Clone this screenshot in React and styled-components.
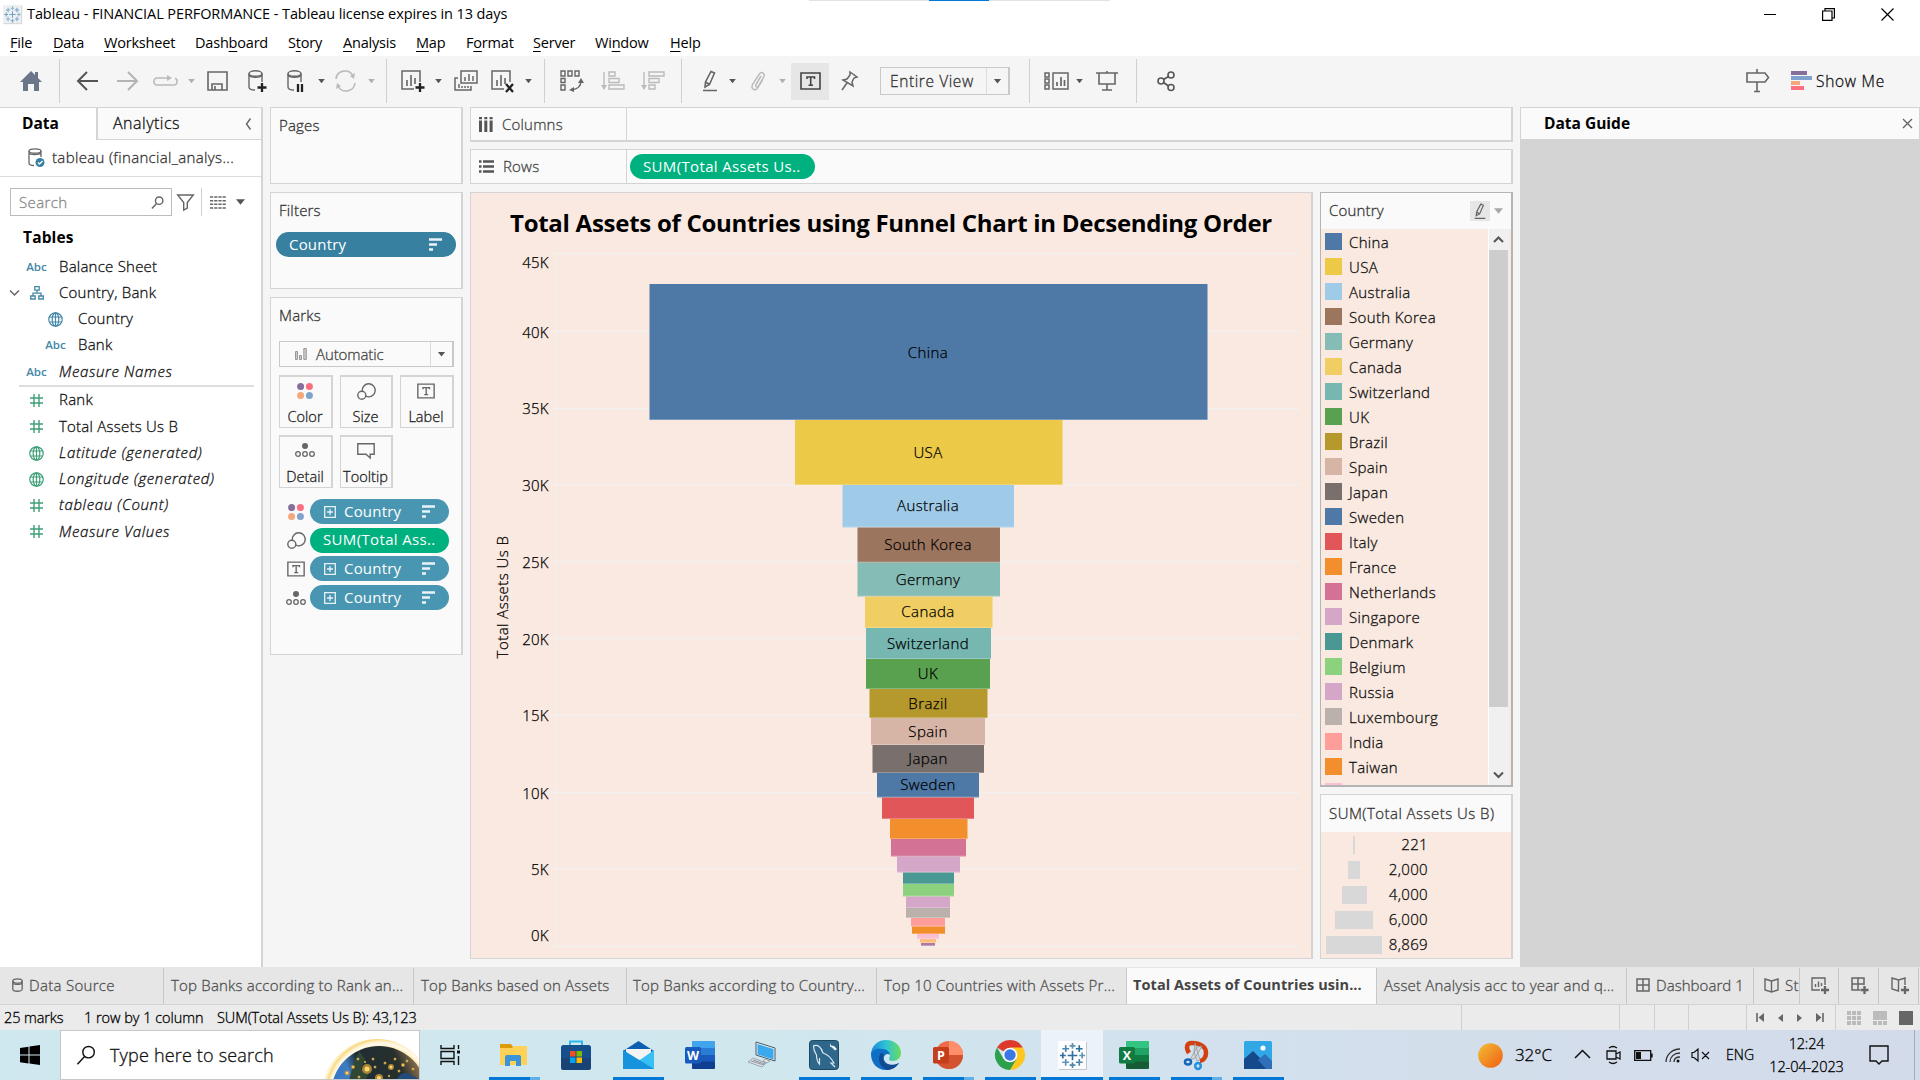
import React from 'react';
import styled, { createGlobalStyle, css } from 'styled-components';

const ui = '"Open Sans", "Noto Sans", sans-serif';
const line = '#d4d4d4';

const Global = createGlobalStyle`
  * { box-sizing: border-box; }
  body { margin: 0; background: #f5f5f5; overflow: hidden; }
  svg { display: block; flex: none; overflow: visible; }
`;

const Screen = styled.div`
  width: 1920px;
  height: 1080px;
  display: flex;
  flex-direction: column;
  font-family: ${ui};
  font-size: 15px;
  font-weight: 300;
  letter-spacing: 0.2px;
  -webkit-text-stroke: 0.3px currentColor;
  color: #222;
  background: #f5f5f5;
  white-space: nowrap;
  overflow: hidden;
`;

const T = styled.span`
  font-size: ${p => p.$s || 15}px;
  font-weight: ${p => p.$w || 'inherit'};
  ${p => p.$w && css`-webkit-text-stroke: 0;`}
  letter-spacing: ${p => (p.$ls !== undefined ? `${p.$ls}px` : p.$w ? '0' : 'inherit')};
  color: ${p => p.$c || 'inherit'};
  font-style: ${p => (p.$i ? 'italic' : 'normal')};
  line-height: 20px;
  padding-bottom: ${p => (p.$pb === undefined ? 2 : p.$pb)}px;
`;

/* ---------- title and menu ---------- */
const TitleBar = styled.header`
  height: 28px;
  background: #fff;
  display: flex;
  align-items: center;
  padding: 0 26px 0 3px;
  position: relative;
`;
const TitleText = styled(T)`
  margin-left: 5px;
  flex: 1;
  color: #000;
`;
const TopStrip = styled.div`
  position: absolute;
  top: 0;
  left: 809px;
  width: 301px;
  height: 1px;
  background: linear-gradient(90deg, #e3e3e3 120px, #0078d7 120px, #0078d7 180px, #e3e3e3 180px);
`;
const WinButtons = styled.div`
  display: flex;
  align-items: center;
  gap: 46px;
`;
const MenuBar = styled.nav`
  height: 28px;
  background: #fff;
  display: flex;
  align-items: center;
  padding: 1px 0 0 10px;
  -webkit-text-stroke: 0;
`;
const MenuItem = styled.div`
  width: ${p => p.$w}px;
  font-size: 14.5px;
  font-weight: 400;
  color: #000;
  letter-spacing: -0.2px;
  line-height: 20px;
  u { text-underline-offset: 3px; text-decoration-thickness: 1px; }
`;

/* ---------- toolbar ---------- */
const Toolbar = styled.div`
  height: 51px;
  display: flex;
  align-items: center;
  padding-bottom: 1px;
  background: #f5f5f5;
`;
const Tool = styled.div`
  width: ${p => p.$w}px;
  flex: none;
  margin-left: ${p => (p.$end ? 'auto' : `${p.$ml}px`)};
  display: flex;
  justify-content: center;
  align-items: center;
  opacity: ${p => (p.$dim ? 0.4 : 1)};
`;
const ToggleOn = styled(Tool)`
  height: 37px;
  background: #e6e6e6;
`;
const Separator = styled.div`
  width: 1px;
  flex: none;
  height: 44px;
  margin-left: ${p => p.$ml}px;
  background: #d0d0d0;
`;
const Caret = styled.i`
  width: ${p => p.$s || 7}px;
  height: ${p => (p.$s || 7) / 2 + 1}px;
  flex: none;
  margin-left: ${p => p.$ml || 0}px;
  background: ${p => p.$c || '#555'};
  clip-path: polygon(0 0, 100% 0, 50% 100%);
`;
const Select = styled.div`
  width: ${p => p.$w}px;
  flex: none;
  height: ${p => p.$h}px;
  margin-left: ${p => p.$ml || 0}px;
  border: 1px solid #c9c9c9;
  border-right-width: 2px;
  display: flex;
  align-items: center;
  background: ${p => p.$bg || '#f5f5f5'};
`;
const SelectValue = styled.div`
  flex: 1;
  display: flex;
  align-items: center;
  padding-left: ${p => p.$pl}px;
  gap: 9px;
`;
const SelectArrow = styled.div`
  width: 22px;
  height: 100%;
  border-left: 1px solid #dcdcdc;
  display: flex;
  align-items: center;
  justify-content: center;
`;
const ShowMe = styled.div`
  display: flex;
  align-items: center;
  gap: 4px;
  margin-left: 22px;
  padding-right: 35px;
`;

/* ---------- body ---------- */
const Body = styled.main`
  height: 860px;
  display: flex;
`;
const DataPane = styled.aside`
  width: 263px;
  height: 860px;
  background: #fff;
  border-right: 2px solid ${line};
  display: flex;
  flex-direction: column;
`;
const PaneTabs = styled.div`
  height: 33px;
  display: flex;
`;
const PaneTab = styled.div`
  flex: ${p => (p.$active ? '0 0 98px' : '1')};
  border-top: 1px solid ${line};
  padding: 0 8px 0 ${p => (p.$active ? 22 : 15)}px;
  display: flex;
  align-items: center;
  justify-content: space-between;
  background: ${p => (p.$active ? '#fff' : '#fafafa')};
  ${p => p.$active ? css`border-right: 2px solid ${line};` : css`border-bottom: 1px solid ${line};`}
`;
const SourceRow = styled.div`
  height: 37px;
  border-bottom: 1px solid #dcdcdc;
  display: flex;
  align-items: center;
  gap: 7px;
  padding-left: 28px;
`;
const SearchRow = styled.div`
  height: 52px;
  padding: 11px 0 0 10px;
  display: flex;
`;
const SearchBox = styled.div`
  width: 162px;
  height: 28px;
  border: 1px solid #bcbcbc;
  display: flex;
  align-items: center;
  justify-content: space-between;
  padding: 0 7px 0 8px;
`;
const SearchTools = styled.div`
  height: 28px;
  display: flex;
  align-items: center;
  padding-left: 5px;
`;
const Rule = styled.div`
  width: 1px;
  height: 28px;
  margin: 0 8px 0 7px;
  background: #d0d0d0;
`;
const TablesHead = styled.div`
  height: 17px;
  padding: 0 0 0 23px;
  color: #000;
  margin-bottom: 8px;
  display: flex;
  align-items: center;
`;
const FieldRow = styled.div`
  height: ${p => p.$h || 26}px;
  padding-left: ${p => (p.$indent ? 19 : 0)}px;
  display: flex;
  align-items: center;
  color: #111;
`;
const Twisty = styled.span`
  width: 26px;
  display: flex;
  justify-content: center;
  padding-left: 2px;
`;
const FieldIcon = styled.span`
  width: 21px;
  margin-right: 12px;
  display: flex;
  justify-content: center;
  color: ${p => p.$c};
`;
const PaneRule = styled.div`
  height: 2px;
  margin: 0 7px 0 19px;
  background: #dedede;
`;

const CardColumn = styled.section`
  width: 207px;
  padding: 0 0 0 7px;
  display: flex;
  flex-direction: column;
  gap: 8px;
`;
const Card = styled.div`
  width: 193px;
  height: ${p => p.$h}px;
  background: #fafafa;
  border: 1px solid ${line};
  border-right-width: 2px;
  padding: 0 6px 0 5px;
`;
const CardTitle = styled.div`
  height: ${p => p.$h || 38}px;
  display: flex;
  align-items: center;
  padding: 0 0 ${p => p.$pb || 4}px 3px;
  color: #333;
`;
const Pill = styled.div`
  height: 25px;
  width: ${p => p.$w}px;
  margin: ${p => p.$m || 0};
  border-radius: 13px;
  background: ${p => p.$bg};
  color: #fff;
  display: flex;
  align-items: center;
  padding: 0 14px 0 ${p => p.$pl || 13}px;
  gap: 8px;
  & > svg:last-child { margin-left: auto; }
`;
const MarkGrid = styled.div`
  display: grid;
  grid-template-columns: 54px 53px 54px;
  gap: 7px;
  padding: 8px 0 11px 3px;
`;
const MarkButton = styled.div`
  height: 53px;
  border: 1px solid ${line};
  border-top-width: 2px;
  border-right-width: 2px;
  display: flex;
  flex-direction: column;
  align-items: center;
  justify-content: space-between;
  padding: 6px 1px 0 0;
`;
const MarkRow = styled.div`
  height: 28.7px;
  display: flex;
  align-items: flex-start;
`;
const MarkIcon = styled.span`
  width: 34px;
  height: 25px;
  display: flex;
  align-items: center;
  justify-content: center;
  padding-left: 5px;
`;

const Work = styled.section`
  width: 1050px;
  display: flex;
  flex-direction: column;
`;
const Shelf = styled.div`
  width: 1043px;
  height: 35px;
  margin-bottom: 7px;
  border: 1px solid ${line};
  border-right-width: 2px;
  border-bottom-width: ${p => (p.$last ? 1 : 2)}px;
  background: #fafafa;
  display: flex;
  align-items: center;
`;
const ShelfName = styled.div`
  width: 156px;
  height: 100%;
  border-right: 1px solid ${line};
  display: flex;
  align-items: center;
  gap: 9px;
  padding-left: 8px;
  color: #444;
`;
const ViewRow = styled.div`
  display: flex;
  gap: 7px;
  margin-top: 1px;
`;
const Viz = styled.div`
  width: 843px;
  height: 767px;
  border: 1px solid ${line};
  border-right-width: 2px;
  background: #fae9e0;
`;
const VizTitle = styled.h1`
  height: 60px;
  margin: 0;
  padding: 0 0 2px 39px;
  display: flex;
  align-items: center;
  font-size: 24px;
  font-weight: 700;
  letter-spacing: -0.27px;
  -webkit-text-stroke: 0;
  color: #000;
`;
const Legends = styled.div`
  width: 193px;
  display: flex;
  flex-direction: column;
  gap: 7px;
`;
const LegendCard = styled.div`
  height: ${p => p.$h}px;
  border: 1px solid ${p => p.$bc};
  border-right-width: 2px;
  ${p => p.$heavy && css`border-bottom-width: 2px;`}
  background: #fae9e0;
  overflow: hidden;
`;
const LegendHead = styled.div`
  height: ${p => p.$h}px;
  background: #fafafa;
  display: flex;
  align-items: center;
  padding: 0 8px;
  color: #333;
`;
const EditButton = styled.span`
  width: 20px;
  height: 20px;
  margin: 0 4px 0 auto;
  background: #e6e6e6;
  display: flex;
  align-items: center;
  justify-content: center;
`;
const LegendBody = styled.div`
  display: flex;
  height: 556px;
`;
const LegendList = styled.div`
  flex: 1;
  overflow: hidden;
  padding: 4px 0 0 4px;
`;
const LegendItem = styled.div`
  height: 25px;
  display: flex;
  gap: 7px;
  color: #111;
  line-height: 18px;
  letter-spacing: 0.35px;
`;
const Swatch = styled.span`
  width: 17px;
  height: 17px;
  background: ${p => p.$c};
`;
const ScrollTrack = styled.div`
  width: 21px;
  margin-right: 2px;
  background: #f0f0f0;
  border-left: 1px solid #fff;
  display: flex;
  flex-direction: column;
  align-items: flex-start;
`;
const ScrollButton = styled.div`
  width: 19px;
  height: 21px;
  display: flex;
  align-items: center;
  justify-content: center;
`;
const Thumb = styled.div`
  width: 19px;
  height: 457px;
  background: #cdcdcd;
`;
const Spacer = styled.div`flex: 1;`;
const SizeRow = styled.div`
  height: 25px;
  display: flex;
  align-items: center;
`;
const SizeBarBox = styled.div`
  width: 66px;
  display: flex;
  justify-content: center;
`;
const SizeBar = styled.div`
  width: ${p => p.$w}px;
  height: 18px;
  background: #d8d8d8;
`;
const SizeValue = styled.div`
  width: 41px;
  text-align: right;
  padding-bottom: 2px;
  letter-spacing: 0.35px;
  color: #111;
`;

const Guide = styled.aside`
  width: 400px;
  display: flex;
  flex-direction: column;
  background: #d4d4d4;
`;
const GuideHead = styled.div`
  height: 33px;
  border: 1px solid ${line};
  background: #fafafa;
  color: #000;
  display: flex;
  align-items: center;
  justify-content: space-between;
  padding: 0 7px 0 23px;
`;

/* ---------- sheet tabs ---------- */
const SheetTabs = styled.div`
  height: 38px;
  background: #e6e6e6;
  border-bottom: 1px solid ${line};
  display: flex;
  padding-top: 1px;
`;
const SheetTab = styled.div`
  width: ${p => p.$w}px;
  flex: none;
  height: 36px;
  border-right: 1px solid #c8c8c8;
  background: ${p => (p.$active ? '#fafafa' : 'transparent')};
  display: flex;
  align-items: center;
  gap: 6px;
  padding-left: ${p => p.$pl}px;
  padding-bottom: ${p => (p.$active ? 0 : 2)}px;
  color: #505050;
  overflow: hidden;
`;
const StatusBar = styled.div`
  height: 25px;
  background: #ebebeb;
  display: flex;
  align-items: center;
  color: #000;
  padding-left: 4px;
`;
const StatusText = styled.div`
  width: ${p => p.$w}px;
`;
const StatusCell = styled.div`
  width: ${p => p.$w}px;
  height: 100%;
  border-left: 1px solid #cfcfcf;
  display: flex;
  align-items: center;
  justify-content: center;
  padding-left: ${p => p.$pl || 0}px;
  padding-right: ${p => p.$pr || 0}px;
  gap: ${p => p.$gap || 0}px;
`;

/* ---------- taskbar ---------- */
const Taskbar = styled.footer`
  height: 50px;
  background: linear-gradient(90deg, #cfe7ef 0%, #d0e7ee 40%, #d2e2ee 60%, #d3deeb 75%, #d3dbea 100%);
  display: flex;
`;
const StartButton = styled.div`
  width: 60px;
  display: flex;
  align-items: center;
  justify-content: center;
`;
const TaskSearch = styled.div`
  width: 360px;
  height: 50px;
  background: #fff;
  border: 1px solid #c4c8ca;
  display: flex;
  align-items: center;
  padding-left: 15px;
  gap: 14px;
  overflow: hidden;
  color: #111;
  & > svg:last-child { margin-left: auto; }
`;
const TaskView = styled.div`
  width: 63px;
  padding-left: 20px;
  display: flex;
  align-items: center;
`;
const AppSlot = styled.div`
  width: 62px;
  height: 50px;
  display: flex;
  flex-direction: column;
  align-items: center;
  background: ${p => (p.$active ? '#ebf3f8' : 'transparent')};
`;
const AppIcon = styled.div`
  height: 47px;
  display: flex;
  align-items: center;
  padding-top: 3px;
`;
const Underline = styled.div`
  height: 3px;
  width: ${p => (p.$full ? 62 : 51)}px;
  background: ${p => (p.$more ? 'linear-gradient(90deg, #0078d7 41px, #62aee6 41px)' : '#0078d7')};
`;
const Tray = styled.div`
  margin-left: auto;
  display: flex;
  align-items: center;
  color: #000;
  padding-right: 5px;
`;
const TrayItem = styled.div`
  width: ${p => p.$w}px;
  display: flex;
  justify-content: ${p => (p.$start ? 'flex-start' : 'center')};
`;
const Clock = styled.div`
  width: 109px;
  display: flex;
  flex-direction: column;
  align-items: center;
  gap: 3px;
  padding: 0 16px 0 0;
`;
const DesktopEdge = styled.div`
  height: 50px;
  border-left: 1px solid #a4adb8;
`;

/* ---------- icons ---------- */
const Ico = ({ w = 24, h = w, c = '#666', sw = 1.6, vb, children }) => (
  <svg width={w} height={h} viewBox={vb || `0 0 ${w} ${h}`} fill="none" stroke={c} strokeWidth={sw}>{children}</svg>
);
const Home = () => <Ico w={22} h={20}><path d="M0 11 11 0l4 4V1h3v6l4 4h-3v9h-5v-7H8v7H3v-9z" fill="#6b7789" stroke="none" /></Ico>;
const Back = ({ flip }) => <Ico w={21} h={20} sw={2} c="#555"><path d={flip ? 'M0 10h20M11 1l9 9-9 9' : 'M21 10H1M10 1l-9 9 9 9'} /></Ico>;
const Redo = () => <Ico w={25} h={12}><path d="M16 3H4a3 3 0 0 0-3 3.500a3 3 0 0 0 3 3.500h17a3 3 0 0 0 3-3.500a3 3 0 0 0-2-3.300" /><path d="m14 0 5 3-5 3z" fill="#666" stroke="none" /></Ico>;
const Save = () => <Ico w={21} h={20}><path d="M1 1h19v18H1zM5 19v-6h10v6M8 19v-4" /></Ico>;
const Drum = ({ kind }) => (
  <Ico w={19} h={22} sw={1.4}>
    <ellipse cx="7.500" cy="3.500" rx="6.500" ry="2.700" /><path d="M1 3.500V17c0 2 3 3 6 3M14 3.500V12" /><path d="M1 5c1 3 12 3 13 0" />
    {kind === 'add' && <path d="M14 13v9M9.500 17.500h9" stroke="#222" strokeWidth="2.300" />}
    {kind === 'pause' && <path d="M11 14v8M15 14v8" stroke="#222" strokeWidth="2.300" />}
  </Ico>
);
const Refresh = () => <Ico w={21} h={20}><path d="M1 8a9 9 0 0 1 17-3M20 12a9 9 0 0 1-17 3" /><path d="m20 2-1 6-4-3zM1 18l1-6 4 3z" fill="#666" stroke="none" /></Ico>;
const Sheet = ({ kind }) => (
  <Ico w={24} h={22} sw={1.5}>
    <path d="M13 19H1V1h18v11" /><path d="M6 10v6M10 5v11M14 8v6" strokeWidth="1.600" />
    {kind === 'add' && <path d="M19 13v9M14.500 17.500h9" stroke="#222" strokeWidth="2.300" />}
    {kind === 'clear' && <path d="m15 14 7 8M22 14l-7 8" stroke="#222" strokeWidth="2.300" />}
  </Ico>
);
const Duplicate = () => <Ico w={24} h={22} sw={1.500}><path d="M7 1h16v12H7zM4 8H1v12h16v-4" /><path d="M11 7v4M15 4v7M19 6v5M5 14v4M8 16v2M11 16v2M14 16v2" /></Ico>;
const Swap = () => <Ico w={24} h={22} sw={1.4}><path d="M1 1h4v5H1zM8 1h4v5H8zM15 1h4v5h-4zM1 8.500h4v4H1zM1 15h4v5H1zM21 11c0 5-3 8-9 9" /><path d="m21 8 3 5h-6zM9 20l5-3v5z" fill="#666" stroke="none" /></Ico>;
const Sort = ({ desc }) => <Ico w={23} h={20} sw={1.400}><path d="M3 1v17" /><path d="m0 14 3 5 3-5z" fill="#666" stroke="none" /><path d={desc ? 'M8 1h15v4H8zM8 7.500h10v4H8zM8 14h6v4H8z' : 'M8 1h6v4H8zM8 7.500h10v4H8zM8 14h15v4H8z'} /></Ico>;
const Pen = ({ k = 1 }) => <Ico w={16 * k} h={22 * k} vb="0 0 16 22" sw={1.6}><path d="M9 1.500 12.500 3 7.500 14.500 3 17l.5-5zM3.500 12l4 2.500M1 20.500h14" /></Ico>;
const Clip = () => <Ico w={17} h={20} sw={1.500}><path d="M11 5 6 13.500c-1 2.500 1.500 3.500 2.500 1.500l5.500-9.500c1-4-3-5.500-5-2L2.500 13.500c-2 5 3 7 5 3.500l5-8" /></Ico>;
const LabelBox = ({ w = 21, h = 18, c = '#444' }) => <Ico w={w} h={h} vb="0 0 21 18" c={c}><path d="M1 1h19v16H1z" /><path d="M7 7V5h7.500v2M10.700 5v8M8.500 13.200h4.500" /></Ico>;
const Pin = () => <Ico w={17} h={20} sw={1.500}><path d="M9 1l7 5-3 1-2 4 1 4-10-6 4-1 3-4zM6 12l-5 7" /></Ico>;
const CardsIcon = () => <Ico w={26} h={18} sw={1.500}><path d="M9 1h15v16H9zM1 1h4v4H1zM1 7h4v4H1zM1 13h4v4H1z" /><path d="M13 10v4M17 5v9M20.500 8v6" strokeWidth="1.700" /></Ico>;
const Present = () => <Ico w={22} h={20}><path d="M0 2h22M3 2v11h16V2M11 0v2M11 13v6M6 19h10" /></Ico>;
const Share = () => <Ico w={18} h={20} c="#555"><circle cx="4" cy="10" r="3" /><circle cx="14" cy="4" r="3" /><circle cx="14" cy="16.500" r="3" /><path d="m6.500 8.500 5-3M6.500 11.500l5 3.500" /></Ico>;
const Sign = () => <Ico w={23} h={24}><path d="M1 4h18l3.500 4.500L19 13H1zM11 0v4M11 13v9M8 22.500h6" /></Ico>;
const ShowMeIcon = () => <svg width="21" height="20"><rect width="16" height="4" fill="#84709b" /><rect y="5" width="21" height="4" fill="#7fa3cc" /><rect y="10" width="9" height="4" fill="#f4a77b" /><rect y="15" width="13" height="4" fill="#fc6f7f" /></svg>;
const Lens = ({ w = 14, c = '#666', sw = 1.5 }) => <Ico w={w} vb="0 0 14 14" c={c} sw={sw}><circle cx="8.800" cy="5" r="4" /><path d="m6 8-5 5.500" /></Ico>;
const Chevron = ({ d = 'down', w = 9, c = '#666', sw = 1.8 }) => {
  const paths = { down: 'M0 1.500 4.500 6 9 1.500', up: 'M0 6 4.500 1.500 9 6', left: 'M6.500 -1.500 2.500 4l4 5.500' };
  return <Ico w={w} h={w * 8 / 9} vb="0 0 9 8" c={c} sw={sw}><path d={paths[d]} /></Ico>;
};
const Funnel = () => <Ico w={17} h={17} sw={1.400}><path d="M.7 1h15.600l-6 7.500V14L6.700 16V8.500z" /></Ico>;
const ListIcon = () => <Ico w={16} h={13} sw={1.6}><path d="M0 1h16M0 4.700h16M0 8.300h16M0 12h16" strokeDasharray="3.200 1" /></Ico>;
const SourceIcon = () => <Ico w={17} h={20} sw={1.300}><ellipse cx="7" cy="3" rx="6" ry="2.200" /><path d="M1 3v12c0 1.500 2 2.500 5 2.500M13 3v6M1 5c1 2 10 2 12 0" /><circle cx="12" cy="14.500" r="4.500" fill="#37809f" stroke="none" /><path d="m10 14.500 1.500 1.500 3-3" stroke="#fff" /></Ico>;
const Globe = () => <Ico w={15} c="currentColor" sw={1.200}><circle cx="7.500" cy="7.500" r="6.700" /><ellipse cx="7.500" cy="7.500" rx="3.300" ry="6.700" /><path d="M7.500 1v13M1.300 5h12.400M1.300 10h12.400" /></Ico>;
const Hash = () => <Ico w={13} c="currentColor" sw={1.400}><path d="M4 0v13M9 0v13M0 4h13M0 9h13" /></Ico>;
const Tree = () => <Ico w={14} c="currentColor" sw={1.300}><path d="M4.800.7h4.400v3.500H4.800zM.7 10h4.500v3H.7zM8.800 10h4.500v3H8.800zM7 4.200v3M3 10V7.200h8V10" /></Ico>;
const SortLines = () => <Ico w={13} h={13} c="#e9f3f7" sw={2.6}><path d="M0 1.500h13M0 6.500h8M0 11.500h4" /></Ico>;
const PlusBox = () => <Ico w={12} c="#e9f3f7" sw={1.300}><path d="M.7.7h10.600v10.600H.7zM6 3v6M3 6h6" /></Ico>;
const Bars = () => <Ico w={12} h={12} c="#999" sw={1}><path d="M.5 3.500h2v8h-2zM4.500 7.500h2v4h-2zM8.800.5h2.500v11H8.800z" fill="#ccc" /></Ico>;
const ColorDots = () => <svg width="16" height="16"><circle cx="3.600" cy="3.600" r="3.500" fill="#84709b" /><circle cx="12.400" cy="3.600" r="3.500" fill="#fc6f7f" /><circle cx="3.600" cy="12.400" r="3.500" fill="#f4a77b" /><circle cx="12.400" cy="12.400" r="3.500" fill="#7fa3cc" /></svg>;
const SizeIcon = () => <Ico w={18} h={17} sw={1.400}><path d="M5.300 8.300A6.500 6.500 0 1 1 9 13.200" /><circle cx="4.800" cy="12.300" r="4" /></Ico>;
const DetailIcon = () => <Ico w={20} h={14} sw={1.300}><circle cx="10" cy="3" r="3" fill="#666" stroke="none" /><circle cx="3" cy="11" r="2.300" /><circle cx="10" cy="11" r="2.300" /><circle cx="17" cy="11" r="2.300" /></Ico>;
const TipIcon = () => <Ico w={18} h={16} sw={1.400}><path d="M.8.8h16.400v10.400h-4V15L9 11.200H.8z" /></Ico>;
const ColumnsIcon = () => <Ico w={14} h={15} c="#555" sw={3}><path d="M1.500 0v2.200M6.800 0v2.200M12.100 0v2.200M1.500 3.500V15M6.800 3.500V15M12.100 3.500V15" /></Ico>;
const RowsIcon = () => <Ico w={15} h={13} c="#555" sw={2.400}><path d="M0 1.500h2.500M4 1.500h11M0 6.500h2.500M4 6.500h11M0 11.500h2.500M4 11.500h11" /></Ico>;
const GridIcon = ({ add }) => <Ico w={add ? 18 : 14} h={add ? 17 : 14} sw={1.500}><path d={add ? 'M9 13H1V1h12v7M7 1v12M1 7h12' : 'M1 1h12v12H1zM7 1v12M1 7h12'} />{add && <path d="M13.500 9v8M9.500 13h8" strokeWidth="2.300" />}</Ico>;
const BookIcon = ({ add }) => <Ico w={add ? 18 : 15} h={add ? 17 : 15} sw={1.400}><path d={add ? 'M7.500 3 1 1v11l6.500 2V3L14 1v7' : 'M7.500 3 1 1v11l6.500 2 6.500-2V1L7.500 3v11'} />{add && <path d="M14 9v8M10 13h8" strokeWidth="2.300" />}</Ico>;
const NewSheet = () => <Ico w={18} h={17} sw={1.400}><path d="M9 13H1V1h13v7M4.500 7v3M7.500 4.500V10M10.500 6v3" /><path d="M14 9v8M10 13h8" strokeWidth="2.300" /></Ico>;
const TabDrum = () => <Ico w={11} h={14} sw={1.300}><ellipse cx="5.500" cy="3" rx="4.700" ry="2.200" /><path d="M.8 3v8c0 3 9.400 3 9.400 0V3M.8 4.500c0 2.500 9.400 2.500 9.400 0" /></Ico>;

const crosses = (c) => {
  const p = [[15, 15, 5], [15, 5, 3], [15, 25, 3], [5, 15, 3], [25, 15, 3], [8, 8, 3.500], [22, 8, 3.500], [8, 22, 3.500], [22, 22, 3.500]];
  return p.map(([x, y, r], i) => <path key={i} d={`M${x - r} ${y}h${2 * r}M${x} ${y - r}v${2 * r}`} stroke={c[i % c.length]} strokeWidth="1.700" />);
};
const TableauLogo = ({ w = 18 }) => <svg width={w} height={w} viewBox="0 0 30 30"><rect width="30" height="30" rx="1" fill={w > 20 ? '#fdfdfd' : '#eef0f2'} /><path d="M29.500 1v28.500H1" stroke="#bfc6ca" fill="none" />{crosses(w > 20 ? ['#2f6f9f', '#5b92b8', '#4b86ad'] : ['#6fa3c6', '#8db6d0', '#7fadcb'])}</svg>;
const WinLogo = () => <svg width="20" height="20"><path d="M0 3l8.500-1.300V9.500H0zM9.500 1.500 20 0v9.500H9.500zM0 10.500h8.500v8L0 17.300zM9.500 10.500H20V20L9.500 18.600z" fill="#000" /></svg>;
const GlobeArt = () => (
  <svg width="96" height="48" viewBox="0 0 96 48">
    <defs>
      <radialGradient id="halo" cx="58" cy="63" r="57" gradientUnits="userSpaceOnUse"><stop offset=".82" stopColor="#ffe9b0" /><stop offset=".88" stopColor="#fffaf0" /><stop offset=".92" stopColor="#fff0c8" /><stop offset=".96" stopColor="#f9d880" /><stop offset="1" stopColor="#fff3d4" /></radialGradient>
      <linearGradient id="sea" x1="0" x2="1" y1=".6" y2=".2"><stop stopColor="#2f74cf" /><stop offset=".28" stopColor="#3f7cc0" /><stop offset=".4" stopColor="#1e2c35" /><stop offset=".75" stopColor="#27302c" /><stop offset="1" stopColor="#b98d5c" /></linearGradient>
    </defs>
    <circle cx="54" cy="63" r="55" fill="url(#halo)" />
    <circle cx="56" cy="63" r="48" fill="url(#sea)" />
    <path d="M36 20l6 8-4 10 8 4-4 8H26l4-16z" fill="#314736" /><path d="M74 48c2-6 10-8 14-4l8 4z" fill="#224b7c" />
    {[[44, 38, 5], [68, 36, 3], [56, 47, 4], [30, 36, 2], [24, 42, 2.500], [35, 28, 1.500], [50, 28, 1.500], [72, 28, 1.500], [80, 34, 2], [84, 30, 1.500], [62, 32, 1.500], [76, 40, 1.500], [52, 36, 1.500], [36, 46, 1.500], [90, 38, 1.500], [42, 31, 1.200], [66, 45, 1.200]].map(([x, y, r], i) => <g key={i}><circle cx={x} cy={y} r={r} fill="#c99a35" opacity=".8" /><circle cx={x} cy={y} r={r / 2} fill="#ffd66e" /></g>)}
  </svg>
);
const TaskViewIcon = () => <Ico w={20} h={20} c="#111" sw={1.400}><path d="M1 0v3.500h13V0M1 20v-3.500h13V20M1 6.500h13v7H1zM18.500 0v4M18.500 11v9" /><path d="M18.500 5.500v3" strokeWidth="3" /></Ico>;
const Explorer = () => <svg width="28" height="24"><path d="M0 1h11l2 3v4H0z" fill="#dc9b08" /><path d="M0 5h12l2-2h13v19H0z" fill="#ffd257" /><path d="M5 23v-9q0-2 2-2h12q2 0 2 2v9h-5v-5h-6v5z" fill="#3b93d8" /></svg>;
const Store = () => <svg width="30" height="30"><path d="M9 6V1.500h12V6" fill="none" stroke="#2cb8ee" strokeWidth="2" /><rect y="5" width="30" height="25" rx="2.500" fill="#15508c" /><path d="M0 18h30v9q0 3-3 3H3q-3 0-3-3z" fill="#1b3c6b" opacity=".7" /><path d="M9 11h5.500v5.500H9z" fill="#f25022" /><path d="M15.500 11H21v5.500h-5.500z" fill="#7fba00" /><path d="M9 17.500h5.500V23H9z" fill="#00a4ef" /><path d="M15.500 17.500H21V23h-5.500z" fill="#ffb900" /></svg>;
const Mail = () => <svg width="31" height="28"><path d="M0 10 15.500 0 31 10v3H0z" fill="#0b5fae" /><path d="M3 8h25v10H3z" fill="#f4f4f4" /><path d="M0 9l15.500 11L31 9v19H0z" fill="#38c0f5" /><path d="M0 9v19h31z" fill="#1793de" /></svg>;
const Office = ({ l, c, shades, round }) => (
  <svg width="30" height="28">
    {round ? <g><circle cx="16" cy="14" r="14" fill={shades[1]} /><path d="M16 0a14 14 0 0 1 14 14H16z" fill={shades[0]} /><path d="M2 14h28a14 14 0 0 1-28 0z" fill={shades[2]} /></g>
      : <g><rect x="7" width="23" height="28" rx="1.500" fill={shades[1]} /><rect x="7" width="23" height="7" rx="1.500" fill={shades[0]} /><rect x="7" y="14" width="23" height="7" fill={shades[2]} /><rect x="7" y="20.500" width="23" height="7.500" rx="1.500" fill={shades[3]} /></g>}
    <rect y="6" width="16" height="16.500" rx="1.500" fill={c} />
    <text x="8" y="19" textAnchor="middle" fontFamily="Open Sans, sans-serif" fontWeight="700" fontSize="12.500" letterSpacing="0" fill="#fff">{l}</text>
  </svg>
);
const Pc = () => <svg width="28" height="26"><path d="m8 0 19 6v13L8 13z" fill="#e8eef2" stroke="#4a5a66" /><path d="m9.500 2 16 5v10.500l-16-5z" fill="#3ba9ee" /><path d="m17 17 5 2-3 2-4-2zM0 20l5-4 13 5-4 4z" fill="#dde2e5" stroke="#8c979e" strokeWidth=".8" /><path d="m3 19 13 4M5 18l12 4" stroke="#8c979e" /></svg>;
const Mysql = () => <svg width="30" height="30"><rect x=".5" y=".5" width="29" height="29" rx="3" fill="#2f678b" stroke="#1e4762" /><path d="M4 6c5-2 8 1 10 7 4 1 8 5 11 10l-3 0 4 4M4.500 6c0 4 1 6 3 9 0 3 1 7 3 9v-6" fill="none" stroke="#d9e7ef" strokeWidth="1.200" /><path d="m21 3 1 2.500 3 .5 3 3-2 1.500-3-3-2-1z" fill="#eef4f7" /></svg>;
const Edge = () => (
  <svg width="30" height="30" viewBox="0 0 30 30">
    <defs><linearGradient id="e1" x1="0" x2="1"><stop stopColor="#1b87d9" /><stop offset=".5" stopColor="#2dc3d7" /><stop offset="1" stopColor="#6bdc57" /></linearGradient></defs>
    <path d="M0 15C0 6 7 0 15 0c9 0 15 6 15 13 0 5-4 8-8 8-3 0-4-1-4-2s1-2 1-4c0-3-3-5-7-5C5 10 1 13 0 15z" fill="url(#e1)" />
    <path d="M0 14c1-4 6-6 11-5 5 0 8 3 8 6-2-2-5-1-6 2-1 4 3 8 8 8 3 0 5-1 7-2-3 5-8 7-13 7C6 30 0 23 0 14z" fill="#0f6fc5" /><path d="M10 13c-4 5-2 14 6 17 5 0 9-3 12-7-8 4-16 1-16-5 0-2 0-3 1-4z" fill="#124a92" />
  </svg>
);
const Chrome = () => <svg width="30" height="30" viewBox="-15 -15 30 30"><path d="M0 0-13-7.500A15 15 0 0 1 13-7.500z" fill="#db3a2d" /><path d="M0-7.500h13A15 15 0 0 1 0 15L6.500 0z" fill="#fdc71f" /><path d="M-13-7.500A15 15 0 0 0 0 15L6.500 4-6.500 3.700z" fill="#2da04b" /><circle r="7.300" fill="#fff" /><circle r="5.700" fill="#3b78e7" /></svg>;
const Snip = () => <svg width="27" height="30"><path d="M6 13C3 8 3 3 9 3c8 0 14 3.500 14 10 0 4.500-3 8-6 8" fill="none" stroke="#d24110" strokeWidth="4.500" /><path d="m12 3 5 17-3 1-3-9zM19 6l-7 12-5 2 7-13z" fill="#d6d9db" stroke="#8b9297" strokeWidth=".7" /><ellipse cx="5" cy="22" rx="3" ry="2.500" fill="none" stroke="#1667b8" strokeWidth="2.500" /><ellipse cx="15" cy="26" rx="2.800" ry="3" fill="none" stroke="#2292e0" strokeWidth="2.500" /></svg>;
const Photos = () => <svg width="28" height="28"><rect width="28" height="28" rx="1.500" fill="#31a8e5" /><path d="M0 18 9 10l18 18H0z" fill="#144a8c" /><path d="m14 19 7-6 7 7v8H22z" fill="#2f6fb8" /><circle cx="19" cy="7" r="2.600" fill="#f5f9fc" /></svg>;
const Sun = () => <svg width="25" height="25"><defs><linearGradient id="sun" x1="0" x2="1" y1="0" y2="1"><stop stopColor="#f3bd35" /><stop offset="1" stopColor="#ef5f13" /></linearGradient></defs><circle cx="12.500" cy="12.500" r="12.300" fill="url(#sun)" /></svg>;
const Meet = () => <Ico w={15} h={18} c="#111" sw={1.300}><path d="M1 5h9v8H1zM10 8l4-2v7l-4-2M3 2q4-3 8 0M3 16q4 3 8 0" /></Ico>;
const Battery = () => <Ico w={19} h={11} c="#111" sw={1.300}><path d="M.7.7h16v9.600h-16zM18 3.500v4" /><path d="M2 2h5v7H2z" fill="#111" stroke="none" /></Ico>;
const Wifi = () => <Ico w={16} h={15} c="#333" sw={1.300}><path d="M1 14C1 7 7 1 15 1M5 14c0-5 4-9 10-9M9 14c0-3 2-5 6-5" /><circle cx="13" cy="13" r="1.500" fill="#111" stroke="none" /></Ico>;
const Mute = () => <Ico w={19} h={14} c="#111" sw={1.200}><path d="M1 4.500h2L7 1v12L3 9.500H1zM11 4l7 7M18 4l-7 7" /></Ico>;
const Notice = () => <Ico w={20} h={20} c="#111" sw={1.400}><path d="M1 1h18v15h-6l-3 3-3-3H1z" /></Ico>;

/* ---------- data ---------- */
const countries = [
  ['China', '#4e79a7', 649.5, 1207.5, 284, 420], ['USA', '#edc948', 795, 1062.5, 420, 485],
  ['Australia', '#a0cbe8', 842.5, 1014, 485, 527.5], ['South Korea', '#9c755f', 857.5, 1000, 527.5, 562.5],
  ['Germany', '#86bcb6', 857.5, 1000, 562.5, 596.5], ['Canada', '#f1ce63', 865, 992.5, 596.5, 628],
  ['Switzerland', '#76b7b2', 866, 991, 628, 659], ['UK', '#59a14f', 866, 990, 659, 689],
  ['Brazil', '#b6992d', 869.5, 987.5, 689, 718], ['Spain', '#d7b5a6', 871, 985, 718, 745],
  ['Japan', '#79706e', 872.5, 984, 745, 773], ['Sweden', '#4e79a7', 877, 979, 773, 797.5],
  ['Italy', '#e15759', 882, 974, 797.5, 819], ['France', '#f28e2b', 890, 967.5, 819, 839],
  ['Netherlands', '#d37295', 891, 966, 839, 856.5], ['Singapore', '#d4a6c8', 897, 960, 856.5, 872.5],
  ['Denmark', '#499894', 903, 954, 872.5, 884], ['Belgium', '#8cd17d', 903, 954, 884, 896.5],
  ['Russia', '#d4a6c8', 906, 950, 896.5, 908], ['Luxembourg', '#bab0ac', 906, 950, 908, 918],
  ['India', '#ff9d9a', 911, 945, 918, 926.5], ['Taiwan', '#f28e2b', 912, 945, 926.5, 934],
  ['', '#fabfd2', 917, 939, 934, 939], ['', '#ffbe7d', 920, 936, 939, 943], ['', '#b07aa1', 921, 935, 943, 946],
];
const ticks = [['45K', 253, 262], ['40K', 331.5, 332], ['35K', 408, 408], ['30K', 484.5, 485.5], ['25K', 561.5, 562.5], ['20K', 638.5, 639.5], ['15K', 715, 715.5], ['10K', 792.5, 793.5], ['5K', 868.5, 869.5], ['0K', 946.5, 935.5]];
const sizes = [['221', 2], ['2,000', 12], ['4,000', 25], ['6,000', 38], ['8,869', 56]];

const ChartText = styled.text`
  fill: #000;
  stroke: #000;
  stroke-width: 0.25px;
  letter-spacing: ${p => p.$ls}px;
`;

const Chart = () => (
  <svg width="840" height="705" viewBox="471 253 840 705" fontFamily={ui} fontSize="15">
    <path d="M556.500 253V947" stroke="#f2f0ee" />
    {ticks.map(([l, y, ty]) => (
      <g key={l}>
        <path d={`M551 ${Math.floor(y) + 0.5}H1300`} stroke="#f3f1ef" strokeWidth="1.300" />
        <ChartText x="548.500" y={ty + 5.500} textAnchor="end" $ls={0.15}>{l}</ChartText>
      </g>
    ))}
    <ChartText transform="translate(508 597) rotate(-90)" textAnchor="middle" $ls={0.45}>Total Assets Us B</ChartText>
    {countries.map(([n, c, x1, x2, y1, y2], i) => (
      <g key={i}>
        <rect x={x1} y={y1} width={x2 - x1} height={y2 - y1} fill={c} />
        <path d={`M${x1} ${y2 - 0.5}H${x2}`} stroke="#fff" strokeOpacity=".25" />
        {i < 12 && <ChartText x="928" y={(y1 + y2) / 2 + (i === 0 ? 5.8 : 5.1)} textAnchor="middle" $ls={0.4}>{n}</ChartText>}
      </g>
    ))}
  </svg>
);

const Field = ({ icon, name, i, indent, h, open }) => {
  const measure = icon === 'hash' || icon === 'geo';
  return (
    <FieldRow $indent={indent} $h={h}>
      <Twisty>{open && <Chevron sw={1.5} />}</Twisty>
      <FieldIcon $c={measure ? '#3f9f78' : '#4487a6'}>
        {icon === 'abc' && <T $s={11.5} $w={600} $pb={0}>Abc</T>}
        {icon === 'tree' && <Tree />}
        {(icon === 'globe' || icon === 'geo') && <Globe />}
        {icon === 'hash' && <Hash />}
      </FieldIcon>
      <T $i={i} $ls={i ? 0.65 : 0.23}>{name}</T>
    </FieldRow>
  );
};

const menus = [['', 'F', 'ile', 43], ['', 'D', 'ata', 51], ['', 'W', 'orksheet', 91], ['Dash', 'b', 'oard', 93], ['S', 't', 'ory', 55], ['', 'A', 'nalysis', 73], ['', 'M', 'ap', 50], ['F', 'o', 'rmat', 67], ['', 'S', 'erver', 62], ['Wi', 'n', 'dow', 75], ['', 'H', 'elp', 60]];

const apps = [
  [<Explorer />, 'more'], [<Store />], [<Mail />, 'on'],
  [<Office l="W" c="#185abd" shades={['#41a5ee', '#2b7cd3', '#185abd', '#103f91']} />], [<Pc />], [<Mysql />, 'on'], [<Edge />, 'on'],
  [<Office round l="P" c="#c43e1c" shades={['#ff8f6b', '#ed6c47', '#d35230']} />, 'more'], [<Chrome />, 'on'], [<TableauLogo w={29} />, 'active'],
  [<Office l="X" c="#107c41" shades={['#33c481', '#21a366', '#107c41', '#185c37']} />, 'on'], [<Snip />, 'more'], [<Photos />, 'on'],
];

export default function App() {
  return (
    <Screen>
      <Global />
      <TitleBar>
        <TopStrip />
        <TableauLogo w={19} />
        <TitleText $s={14.5} $w={400} $ls={-0.09} $pb={0}>Tableau - FINANCIAL PERFORMANCE - Tableau license expires in 13 days</TitleText>
        <WinButtons>
          <Ico w={12} c="#000" sw={1}><path d="M0 6.500h12" /></Ico>
          <Ico w={13} c="#000" sw={1.200}><path d="M.6 3h9.400v9.400H.6zM3 3V.6h9.400V10H10" /></Ico>
          <Ico w={13} c="#000" sw={1.200}><path d="m.5.5 12 12M12.500.5l-12 12" /></Ico>
        </WinButtons>
      </TitleBar>
      <MenuBar>{menus.map(([a, k, b, w]) => <MenuItem key={k + b} $w={w}>{a}<u>{k}</u>{b}</MenuItem>)}</MenuBar>
      <Toolbar>
        <Tool $ml={19} $w={23}><Home /></Tool>
        <Separator $ml={17} />
        <Tool $ml={17} $w={21}><Back /></Tool>
        <Tool $ml={19} $w={21} $dim><Back flip /></Tool>
        <Tool $ml={15} $w={25} $dim><Redo /></Tool>
        <Caret $ml={10} $c="#b0b0b0" />
        <Tool $ml={12} $w={21}><Save /></Tool>
        <Tool $ml={20} $w={19}><Drum kind="add" /></Tool>
        <Tool $ml={21} $w={16}><Drum kind="pause" /></Tool>
        <Caret $ml={14} />
        <Tool $ml={10} $w={21} $dim><Refresh /></Tool>
        <Caret $ml={12} $c="#b0b0b0" />
        <Separator $ml={11} />
        <Tool $ml={13} $w={25}><Sheet kind="add" /></Tool>
        <Caret $ml={10} />
        <Tool $ml={12} $w={24}><Duplicate /></Tool>
        <Tool $ml={13} $w={24}><Sheet kind="clear" /></Tool>
        <Caret $ml={10} />
        <Separator $ml={12} />
        <Tool $ml={15} $w={24}><Swap /></Tool>
        <Tool $ml={17} $w={23} $dim><Sort /></Tool>
        <Tool $ml={17} $w={23} $dim><Sort desc /></Tool>
        <Separator $ml={17} />
        <Tool $ml={20} $w={16}><Pen /></Tool>
        <Caret $ml={11} />
        <Tool $ml={14} $w={17} $dim><Clip /></Tool>
        <Caret $ml={12} $c="#b0b0b0" />
        <ToggleOn $ml={5} $w={38}><LabelBox /></ToggleOn>
        <Tool $ml={12} $w={17}><Pin /></Tool>
        <Select $ml={22} $w={130} $h={28}>
          <SelectValue $pl={9}><T $s={15.5} $c="#333" $ls={0.6} $pb={1}>Entire View</T></SelectValue>
          <SelectArrow><Caret $s={8} /></SelectArrow>
        </Select>
        <Separator $ml={19} />
        <Tool $ml={14} $w={26}><CardsIcon /></Tool>
        <Caret $ml={6} />
        <Tool $ml={13} $w={22}><Present /></Tool>
        <Separator $ml={18} />
        <Tool $ml={20} $w={18}><Share /></Tool>
        <Tool $end $w={23}><Sign /></Tool>
        <ShowMe><ShowMeIcon /><T $s={15.5} $ls={0.75} $c="#111" $pb={1}>Show Me</T></ShowMe>
      </Toolbar>

      <Body>
        <DataPane>
          <PaneTabs>
            <PaneTab $active><T $s={15.5} $w={700} $c="#000">Data</T></PaneTab>
            <PaneTab><T $s={16} $ls={0.5} $c="#111">Analytics</T><Chevron d="left" sw={1.4} /></PaneTab>
          </PaneTabs>
          <SourceRow><SourceIcon /><T $c="#333" $ls={0.34}>tableau (financial_analys...</T></SourceRow>
          <SearchRow>
            <SearchBox><T $c="#888" $pb={0} $ls={0.4}>Search</T><Lens w={13} /></SearchBox>
            <SearchTools><Funnel /><Rule /><ListIcon /><Caret $ml={10} $s={9} /></SearchTools>
          </SearchRow>
          <TablesHead><T $s={15.5} $w={700} $ls={0.15}>Tables</T></TablesHead>
          <Field icon="abc" name="Balance Sheet" />
          <Field icon="tree" name="Country, Bank" open />
          <Field icon="globe" name="Country" indent />
          <Field icon="abc" name="Bank" indent />
          <Field icon="abc" name="Measure Names" i h={27} />
          <PaneRule />
          <Field icon="hash" name="Rank" h={26} />
          <Field icon="hash" name="Total Assets Us B" h={27} />
          <Field icon="geo" name="Latitude (generated)" i />
          <Field icon="geo" name="Longitude (generated)" i />
          <Field icon="hash" name="tableau (Count)" i />
          <Field icon="hash" name="Measure Values" i h={27} />
        </DataPane>

        <CardColumn>
          <Card $h={77}><CardTitle>Pages</CardTitle></Card>
          <Card $h={97}>
            <CardTitle>Filters</CardTitle>
            <Pill $bg="#37809f" $w={180} $m="1px 0 0 0"><T $w={500} $ls={0.2}>Country</T><SortLines /></Pill>
          </Card>
          <Card $h={358}>
            <CardTitle $h={43} $pb={9}>Marks</CardTitle>
            <Select $w={175} $h={26} $bg="#fafafa" $ml={3}>
              <SelectValue $pl={15}><Bars /><T $c="#444" $ls={-0.1} $pb={0}>Automatic</T></SelectValue>
              <SelectArrow><Caret $s={8} /></SelectArrow>
            </Select>
            <MarkGrid>
              <MarkButton><ColorDots /><T $s={14.5} $ls={0.05} $pb={0}>Color</T></MarkButton>
              <MarkButton><SizeIcon /><T $s={14.5} $ls={0.05} $pb={0}>Size</T></MarkButton>
              <MarkButton><LabelBox w={18} h={16} c="#666" /><T $s={14.5} $ls={0.05} $pb={0}>Label</T></MarkButton>
              <MarkButton><DetailIcon /><T $s={14.5} $ls={0.05} $pb={0}>Detail</T></MarkButton>
              <MarkButton><TipIcon /><T $s={14.5} $ls={0.05} $pb={0}>Tooltip</T></MarkButton>
            </MarkGrid>
            {[<ColorDots />, <SizeIcon />, <LabelBox w={18} h={16} c="#666" />, <DetailIcon />].map((ic, i) => (
              <MarkRow key={i}>
                <MarkIcon>{ic}</MarkIcon>
                {i === 1
                  ? <Pill $bg="#00b180" $w={139}><T $w={500} $ls={0.35}>SUM(Total Ass..</T></Pill>
                  : <Pill $bg="#4996b2" $w={139} $pl={14}><PlusBox /><T $w={500} $ls={0.2}>Country</T><SortLines /></Pill>}
              </MarkRow>
            ))}
          </Card>
        </CardColumn>

        <Work>
          <Shelf><ShelfName><ColumnsIcon /><T $pb={1}>Columns</T></ShelfName></Shelf>
          <Shelf $last>
            <ShelfName><RowsIcon /><T $pb={1}>Rows</T></ShelfName>
            <Pill $bg="#00b180" $w={185} $m="0 0 0 3px"><T $w={500} $ls={0.35}>SUM(Total Assets Us..</T></Pill>
          </Shelf>
          <ViewRow>
            <Viz>
              <VizTitle>Total Assets of Countries using Funnel Chart in Decsending Order</VizTitle>
              <Chart />
            </Viz>
            <Legends>
              <LegendCard $h={595} $bc="#b4b4b4" $heavy>
                <LegendHead $h={36}><T>Country</T><EditButton><Pen k={0.75} /></EditButton><Caret $s={9} $c="#a8a8a8" /></LegendHead>
                <LegendBody>
                  <LegendList>
                    {countries.slice(0, 23).map(([n, c], i) => <LegendItem key={i}><Swatch $c={c} />{n}</LegendItem>)}
                  </LegendList>
                  <ScrollTrack>
                    <ScrollButton><Chevron d="up" sw={2} c="#555" /></ScrollButton>
                    <Thumb />
                    <Spacer />
                    <ScrollButton><Chevron sw={2} c="#555" /></ScrollButton>
                  </ScrollTrack>
                </LegendBody>
              </LegendCard>
              <LegendCard $h={165} $bc={line}>
                <LegendHead $h={37}><T $ls={0.47}>SUM(Total Assets Us B)</T></LegendHead>
                {sizes.map(([n, w]) => <SizeRow key={n}><SizeBarBox><SizeBar $w={w} /></SizeBarBox><SizeValue>{n}</SizeValue></SizeRow>)}
              </LegendCard>
            </Legends>
          </ViewRow>
        </Work>

        <Guide>
          <GuideHead><T $s={15.5} $w={700}>Data Guide</T><Ico w={9} sw={1.4}><path d="m0 0 9 9M9 0 0 9" /></Ico></GuideHead>
        </Guide>
      </Body>

      <SheetTabs>
        <SheetTab $w={164} $pl={12}><TabDrum /><T $ls={0.3} $pb={0}>Data Source</T></SheetTab>
        <SheetTab $w={250} $pl={7}>Top Banks according to Rank an...</SheetTab>
        <SheetTab $w={213} $pl={7}>Top Banks based on Assets</SheetTab>
        <SheetTab $w={250} $pl={6}>Top Banks according to Country...</SheetTab>
        <SheetTab $w={250} $pl={7}>Top 10 Countries with Assets Pr...</SheetTab>
        <SheetTab $w={250} $pl={6} $active><T $s={14.5} $w={700} $ls={0.07} $c="#444">Total Assets of Countries usin...</T></SheetTab>
        <SheetTab $w={250} $pl={7}>Asset Analysis acc to year and q...</SheetTab>
        <SheetTab $w={127} $pl={9}><GridIcon /><T $ls={0.05} $pb={0}>Dashboard 1</T></SheetTab>
        <SheetTab $w={46} $pl={10}><BookIcon />St</SheetTab>
        <SheetTab $w={39} $pl={11}><NewSheet /></SheetTab>
        <SheetTab $w={40} $pl={12}><GridIcon add /></SheetTab>
        <SheetTab $w={40} $pl={12}><BookIcon add /></SheetTab>
      </SheetTabs>
      <StatusBar>
        <StatusText $w={80}><T $s={14.5} $ls={-0.1}>25 marks</T></StatusText>
        <StatusText $w={133}><T $s={14.5} $ls={-0.03}>1 row by 1 column</T></StatusText>
        <StatusText $w={1244}><T $s={14.5} $ls={-0.07}>SUM(Total Assets Us B): 43,123</T></StatusText>
        <StatusCell $w={158} /><StatusCell $w={35} /><StatusCell $w={34} /><StatusCell $w={58} />
        <StatusCell $w={89} $gap={14} $pr={2}>
          <Ico w={8} h={9}><path d="M1 0v9" /><path d="M8 0v9L2.500 4.500z" fill="#666" stroke="none" /></Ico>
          <Ico w={5} h={8}><path d="M5 0v8L0 4z" fill="#666" stroke="none" /></Ico>
          <Ico w={5} h={8}><path d="M0 0v8l5-4z" fill="#666" stroke="none" /></Ico>
          <Ico w={8} h={9}><path d="M7 0v9" /><path d="M0 0v9l5.500-4.500z" fill="#666" stroke="none" /></Ico>
        </StatusCell>
        <StatusCell $w={84} $gap={12} $pl={4}>
          <Ico w={14} h={14} c="#bbb" sw={4}><path d="M0 2h14M0 7h14M0 12h14" strokeDasharray="4 1" /></Ico>
          <Ico w={14} h={14} c="#bbb" sw={4}><path d="M0 4.500h14" strokeWidth="9" /><path d="M0 12h14" strokeDasharray="4 1" /></Ico>
          <Ico w={14} h={14}><path d="M0 0h14v14H0z" fill="#666" stroke="none" /></Ico>
        </StatusCell>
      </StatusBar>

      <Taskbar>
        <StartButton><WinLogo /></StartButton>
        <TaskSearch><Lens w={20} c="#111" sw={1} /><T $s={18} $pb={0} $ls={0.18}>Type here to search</T><GlobeArt /></TaskSearch>
        <TaskView><TaskViewIcon /></TaskView>
        {apps.map(([icon, state], i) => (
          <AppSlot key={i} $active={state === 'active'}>
            <AppIcon>{icon}</AppIcon>
            {state && <Underline $full={state === 'active'} $more={state === 'more'} />}
          </AppSlot>
        ))}
        <Tray>
          <TrayItem $w={37} $start><Sun /></TrayItem>
          <TrayItem $w={60} $start><T $s={17} $ls={-0.1} $pb={0}>32°C</T></TrayItem>
          <TrayItem $w={31} $start><Chevron d="up" w={15} c="#111" sw={0.9} /></TrayItem>
          <TrayItem $w={28} $start><Meet /></TrayItem>
          <TrayItem $w={31} $start><Battery /></TrayItem>
          <TrayItem $w={26} $start><Wifi /></TrayItem>
          <TrayItem $w={35} $start><Mute /></TrayItem>
          <TrayItem $w={34} $start><T $s={14} $pb={0} $ls={0.1}>ENG</T></TrayItem>
          <Clock><T $s={14.5} $ls={-0.2} $pb={0}>12:24</T><T $s={14.5} $ls={-0.1} $pb={0}>12-04-2023</T></Clock>
          <TrayItem $w={45} $start><Notice /></TrayItem>
          <DesktopEdge />
        </Tray>
      </Taskbar>
    </Screen>
  );
}
